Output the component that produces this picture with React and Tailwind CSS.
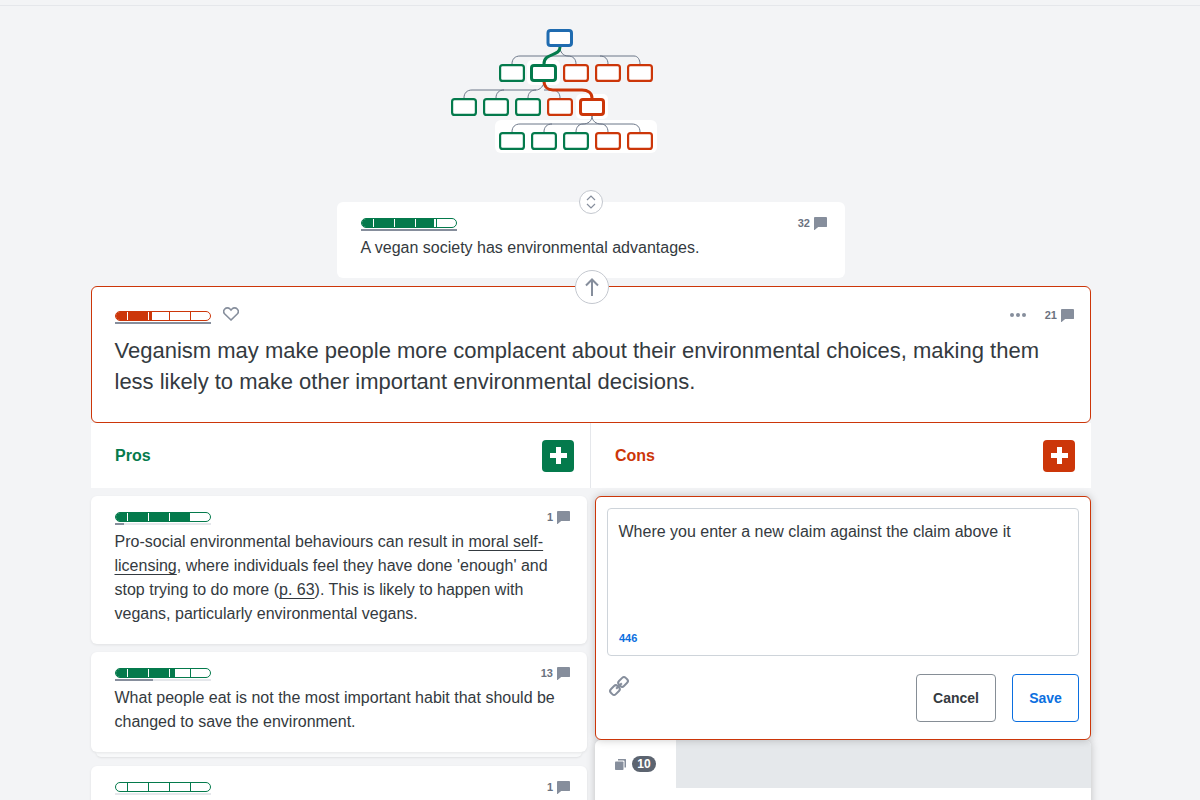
import React from "react";

const GREEN = "#047a4c";
const RED = "#cc3609";
const GRAY = "#6b7688";

function Pill({ color, fill, under, underBg = true }) {
  return (
    <div className="w-[96px]">
      <div className="relative h-[10px] rounded-full border overflow-hidden bg-white" style={{ borderColor: color }}>
        <div className="absolute left-0 top-0 bottom-0" style={{ width: fill, background: color }} />
        {[11, 32, 53, 74].map((x) => (
          <div key={x} className="absolute top-0 bottom-0 w-px" style={{ left: x, background: x < fill ? "#fff" : color }} />
        ))}
      </div>
      {underBg && (
        <div className="mt-[1px] h-[2px] bg-[#e5e7eb]">
          <div className="h-full bg-[#868e9c]" style={{ width: under }} />
        </div>
      )}
    </div>
  );
}

function Bubble() {
  return (
    <svg width="13" height="13" viewBox="0 0 13 13" className="block">
      <path d="M.9 0h11.200a.9.900 0 0 1 .9.900v8.300a.9.900 0 0 1-.9.900H4.200L.6 13a.35.350 0 0 1-.6-.25V.9A.9.900 0 0 1 .9 0z" fill="#868e9c" />
    </svg>
  );
}

function Count({ n }) {
  return (
    <div className="flex items-center gap-[4px] text-[11px] font-bold leading-[14px] text-[#6b7280]">
      <span>{n}</span>
      <Bubble />
    </div>
  );
}

function Tree() {
  const box = (x, y, w, c, t = 2.2, key) => (
    <rect key={key ?? `${x}-${y}`} x={x + t / 2} y={y + t / 2} width={w - t} height={18 - t} rx="2.5" fill="#fff" stroke={c} strokeWidth={t} />
  );
  const g = { fill: "none", stroke: GRAY, strokeWidth: 1 };
  return (
    <svg width="230" height="140" viewBox="440 20 230 140" className="block">
      <rect x="495" y="120" width="162" height="33" rx="6" fill="#fff" />
      <rect x="527" y="60" width="33" height="25" rx="5" fill="#fff" />
      <rect x="576" y="94" width="32" height="25" rx="5" fill="#fff" />
      <path {...g} d="M512 64c0-5 3-8 8-8h114c4 0 6 4 6 8M560 47c0 5 3 9 8 9M576 64c0-5-3-8-8-8M608 64c0-5-3-8-8-8" />
      <path {...g} d="M464 98c0-5 3-8 8-8h64c4 0 8-4 8-9M496 98c0-5 3-8 8-8M528 98c0-5 3-8 8-8M560 98c0-5-3-8-8-8h-8" />
      <path {...g} d="M512 132c0-5 3-8 8-8h112c5 0 8 3 8 8M544 132c0-5 3-8 8-8M592 116c0 5-4 8-9 8c-4 0-7 3-7 8M592 116c0 5 4 8 9 8c4 0 7 3 7 8" />
      <path d="M560 47c0 10-16 5-16 17" fill="none" stroke={GREEN} strokeWidth="3" />
      <path d="M544 81c0 6 4 9 9 9h29c6 0 10 3 10 8" fill="none" stroke={RED} strokeWidth="3" />
      {box(546.5, 29, 26.5, "#1f6bb0", 3)}
      {box(499, 64, 26, GREEN)}
      {box(530, 64, 27, GREEN, 3)}
      {[563, 595, 627].map((x) => box(x, 64, 26, RED))}
      {[451, 483, 515].map((x) => box(x, 98, 26, GREEN))}
      {box(547, 98, 26, RED)}
      {box(579, 98, 26, RED, 3)}
      {[499, 531, 563].map((x) => box(x, 132, 26, GREEN))}
      {[595, 627].map((x) => box(x, 132, 26, RED))}
    </svg>
  );
}

function AddButton({ color }) {
  return (
    <div className="flex h-[32px] w-[32px] items-center justify-center rounded-[4px]" style={{ background: color }}>
      <svg width="17" height="17" viewBox="0 0 17 17" fill="#fff"><path d="M6 0h5v6h6v5h-6v6H6v-6H0V6h6z" /></svg>
    </div>
  );
}

function Card({ fill, under, n, children, extra }) {
  return (
    <div className={`relative rounded-[6px] bg-white pl-[24px] pr-[17px] pt-[16px] shadow-[0_1px_3px_rgba(0,0,0,0.08)] ${extra}`}>
      <div className="flex items-start justify-between">
        <Pill color={GREEN} fill={fill} under={under} />
        <div className="-mt-[2px]"><Count n={n} /></div>
      </div>
      <div className="-ml-[0.5px] mt-[5px] text-[16px] leading-[24px] text-[#343a40]">{children}</div>
    </div>
  );
}

const U = ({ children }) => <span className="underline underline-offset-[3px] decoration-[1px]">{children}</span>;

export default function App() {
  return (
    <div className="h-[800px] overflow-hidden bg-[#f3f4f6] font-['Liberation_Sans',Arial,sans-serif]">
      <div className="h-[6px] border-b border-[#e5e7eb]" />
      <div className="ml-[91px] w-[1000px]">
        <div className="ml-[349px] mt-[14px]"><Tree /></div>

        <div className="relative mx-auto mt-[42px] h-[76px] w-[508px] rounded-[6px] bg-white px-[24px] pt-[16px]">
          <div className="absolute left-[242px] -top-[12px] flex h-[24px] w-[24px] items-center justify-center rounded-full border border-[#c4c8cf] bg-white">
            <svg width="10" height="14" viewBox="0 0 10 14" fill="none" stroke="#868e9c" strokeWidth="1.2"><path d="M1 5l4-4 4 4M1 9l4 4 4-4" /></svg>
          </div>
          <div className="flex items-start justify-between">
            <Pill color={GREEN} fill={72} under={96} />
            <div className="-mt-[2px] mr-[-6px]"><Count n={32} /></div>
          </div>
          <div className="-ml-[0.5px] mt-[5px] text-[16px] leading-[24px] text-[#343a40]">A vegan society has environmental advantages.</div>
        </div>

        <div className="relative mt-[8px] h-[137px] rounded-[6px] border border-[#cc3609] bg-white pl-[23px] pr-[16px] pt-[24px]">
          <div className="absolute left-[483px] -top-[17px] flex h-[34px] w-[34px] items-center justify-center rounded-full border border-[#c4c8cf] bg-white">
            <svg width="14" height="18" viewBox="0 0 14 18" fill="none" stroke="#868e9c" strokeWidth="2"><path d="M7 18V1.500M1 7.500l6-6 6 6" /></svg>
          </div>
          <div className="flex items-start justify-between">
            <div className="flex items-start gap-[12px]">
              <Pill color={RED} fill={36} under={96} />
              <svg width="16" height="14" viewBox="0 0 16 14" fill="none" stroke="#868e9c" strokeWidth="1.6" className="-mt-[4px]"><path d="M8 13L1.800 7A3.600 3.600 0 0 1 1.800 2 3.600 3.600 0 0 1 7 2l1 1 1-1a3.600 3.600 0 0 1 5.200 0 3.600 3.600 0 0 1 0 5z" /></svg>
            </div>
            <div className="-mt-[3px] flex items-center gap-[19px]">
              <div className="flex gap-[2px]">
                {[0, 1, 2].map((i) => <div key={i} className="h-[4px] w-[4px] rounded-full bg-[#868e9c]" />)}
              </div>
              <Count n={21} />
            </div>
          </div>
          <div className="-ml-[0.5px] mt-[11px] text-[22px] leading-[31px] text-[#343a40]">
            Veganism may make people more complacent about their environmental choices, making them less likely to make other important environmental decisions.
          </div>
        </div>

        <div className="flex h-[65px] bg-white">
          <div className="flex w-[500px] items-center justify-between border-r border-[#e5e7eb] pl-[24px] pr-[16px] text-[16px] font-bold" style={{ color: GREEN }}>
            <span>Pros</span><AddButton color={GREEN} />
          </div>
          <div className="flex w-[500px] items-center justify-between pl-[24px] pr-[16px] text-[16px] font-bold" style={{ color: RED }}>
            <span>Cons</span><AddButton color={RED} />
          </div>
        </div>

        <div className="mt-[8px] flex gap-[8px]">
          <div className="flex w-[496px] flex-col">
            <Card fill={75} under={9} n={1} extra="h-[148px]">
              Pro-social environmental behaviours can result in <U>moral self-licensing</U>, where individuals feel they have done 'enough' and stop trying to do more (<U>p. 63</U>). This is likely to happen with vegans, particularly environmental vegans.
            </Card>
            <div className="mt-[8px]">
              <Card fill={59} under={38} n={13} extra="z-10 h-[100px]">
                What people eat is not the most important habit that should be changed to save the environment.
              </Card>
              <div className="mx-[5px] h-[5px] rounded-b-[6px] bg-[#f8f9fa] shadow-[0_1px_2px_rgba(0,0,0,0.08)]" />
            </div>
            <div className="mt-[9px]">
              <Card fill={0} under={0} n={1} extra="h-[100px]"> </Card>
            </div>
          </div>

          <div className="flex w-[496px] flex-col">
            <div className="relative z-10 h-[244px] rounded-[6px] border border-[#cc3609] bg-white p-[11px] shadow-[0_0_8px_rgba(0,0,0,0.22)]">
              <div className="flex h-[148px] flex-col justify-between rounded-[4px] border border-[#ced4da] pb-[10px] pl-[11px] pr-[11px] pt-[11px]">
                <div className="-ml-[0.5px] text-[16px] leading-[24px] text-[#343a40]">Where you enter a new claim against the claim above it</div>
                <div className="text-[11px] font-bold leading-[14px] text-[#0b6fe0]">446</div>
              </div>
              <div className="mt-[18px] flex items-start justify-between">
                <div className="ml-[3px] mt-[3px]">
                  <svg width="18" height="18" viewBox="0 0 18 18" fill="none" stroke="#868e9c" strokeWidth="2" className="overflow-visible">
                    <g transform="rotate(-45 9 9)">
                      <rect x="-1.500" y="5.500" width="9.500" height="7" rx="2.500" />
                      <rect x="10" y="5.500" width="9.500" height="7" rx="2.500" />
                      <path d="M5 9h8" />
                    </g>
                  </svg>
                </div>
                <div className="flex gap-[16px]">
                  <div className="flex h-[48px] w-[80px] items-center justify-center rounded-[4px] border border-[#868e96] text-[14px] font-bold text-[#343a40]">Cancel</div>
                  <div className="flex h-[48px] w-[67px] items-center justify-center rounded-[4px] border border-[#0b6fe0] text-[14px] font-bold text-[#0b6fe0]">Save</div>
                </div>
              </div>
            </div>
            <div className="h-[80px] rounded-t-[6px] bg-white shadow-[0_0_8px_rgba(0,0,0,0.22)]">
              <div className="flex h-[48px] rounded-t-[6px] bg-[#e5e8eb]">
                <div className="flex w-[81px] items-center gap-[6px] rounded-tl-[6px] bg-white pl-[20px]">
                  <svg width="11" height="11" viewBox="0 0 11 11" fill="#868e9c"><path d="M3 0h7.500a.5.500 0 0 1 .5.500V8a.5.500 0 0 1-.5.500H9.500V2.500a1 1 0 0 0-1-1H3z" /><rect x="0" y="2.500" width="8.500" height="8.500" rx=".8" /></svg>
                  <div className="flex h-[16px] w-[24px] items-center justify-center rounded-full bg-[#5c6470] text-[12px] font-bold text-white">10</div>
                </div>
              </div>
            </div>
          </div>
        </div>
      </div>
    </div>
  );
}
